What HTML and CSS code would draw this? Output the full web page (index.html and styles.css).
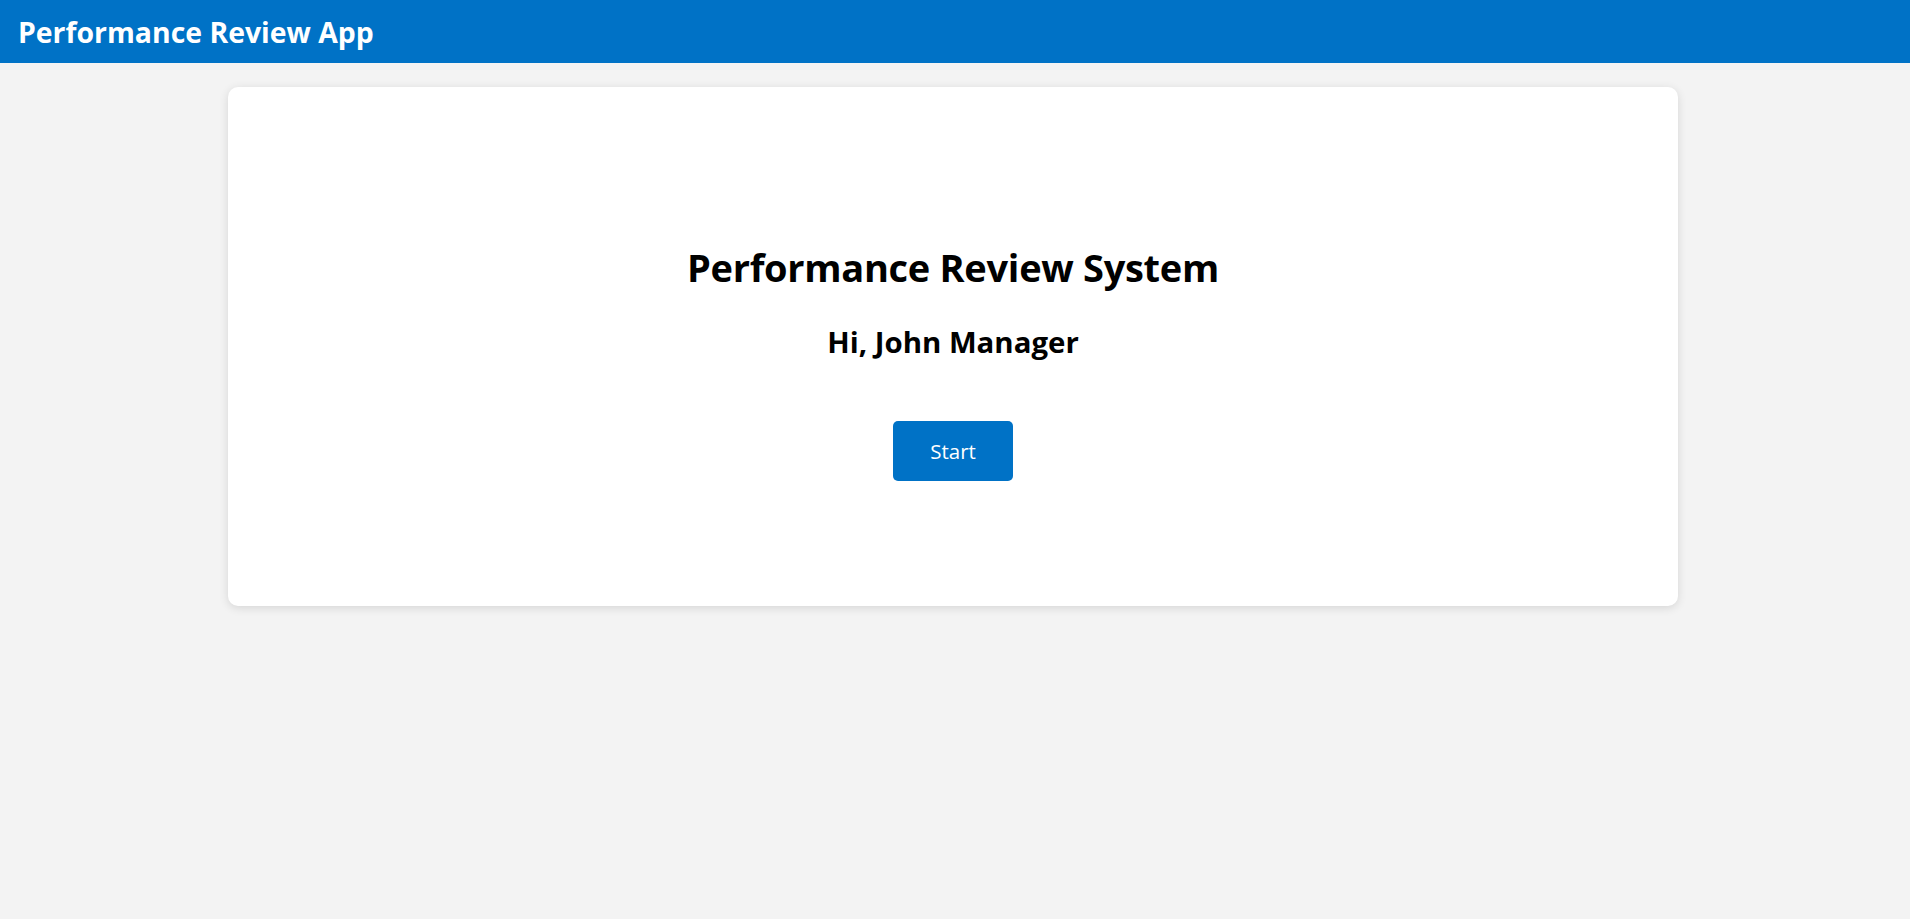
FILE: index.html
```html
<!DOCTYPE html>
<html lang="en">
<head>
<meta charset="utf-8">
<title>Performance Review App</title>
<link rel="stylesheet" href="styles.css">
</head>
<body>
<header class="topbar">
  <div class="brand">Performance Review App</div>
</header>
<main class="content">
  <section class="card">
    <h1 class="title">Performance Review System</h1>
    <h2 class="greeting">Hi, John Manager</h2>
    <button class="start-btn" type="button">Start</button>
  </section>
</main>
</body>
</html>
```
FILE: styles.css
```css
html, body {
  margin: 0;
  padding: 0;
}
body {
  background: #f3f3f3;
  font-family: "Open Sans", "Noto Sans", "DejaVu Sans", sans-serif;
  color: #000;
  min-height: 919px;
}
.topbar {
  height: 63px;
  background: #0072c6;
  display: flex;
  align-items: center;
  padding: 0 18px;
  box-sizing: border-box;
}
.brand {
  color: #fff;
  font-weight: 700;
  font-size: 28.4px;
  letter-spacing: 0;
}
.content {
  display: flex;
  justify-content: center;
  padding-top: 24px;
  padding-right: 4px;
}
.card {
  width: 1450px;
  height: 519px;
  box-sizing: border-box;
  background: #fff;
  border-radius: 10px;
  box-shadow: 0 2px 10px rgba(0,0,0,0.12);
  display: flex;
  flex-direction: column;
  align-items: center;
  padding-top: 154px;
}
.title {
  margin: 0;
  font-size: 38px;
  font-weight: 700;
  line-height: 52px;
  letter-spacing: -0.3px;
}
.greeting {
  margin: 31px 0 0;
  font-size: 29.4px;
  font-weight: 700;
  line-height: 36px;
  letter-spacing: 0;
}
.start-btn {
  margin-top: 61px;
  width: 120px;
  height: 60px;
  border: none;
  border-radius: 5px;
  background: #0072c6;
  color: #fff;
  font-family: "Open Sans", "Noto Sans", sans-serif;
  font-size: 20.5px;
  cursor: pointer;
}
```
